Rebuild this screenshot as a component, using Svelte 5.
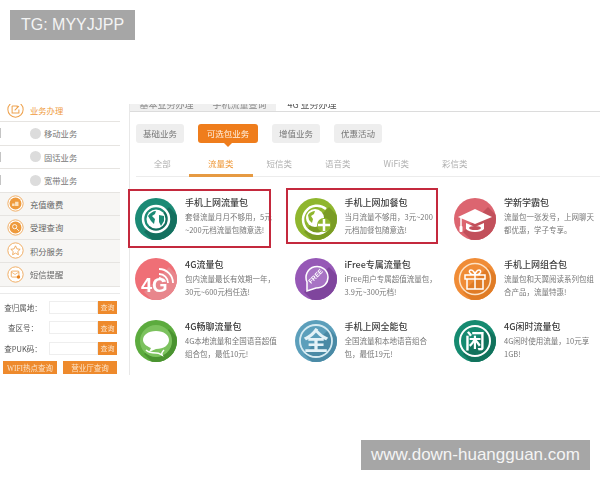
<script>
  const subMenu = ["移动业务", "固话业务", "宽带业务"];
  const lookups = [
    { label: "查归属地：" },
    { label: "查区号：" },
    { label: "查PUK码：" }
  ];
  const pills = ["基础业务", "可选包业务", "增值业务", "优惠活动"];
  const filters = ["全部", "流量类", "短信类", "语音类", "WiFi类", "彩信类"];
  const packs = [
    { id: "globe", color: "#1b8a75", shade: "#14705f", title: "手机上网流量包", lines: ["套餐流量月月不够用，5元", "~200元档流量包随意选!"], mark: "mark-a" },
    { id: "plus", color: "#8fb62e", shade: "#7a9c24", title: "手机上网加餐包", lines: ["当月流量不够用，3元~200", "元档加餐包随意选!"], mark: "mark-b" },
    { id: "cap", color: "#dc6570", shade: "#c2505b", title: "学新学霸包", lines: ["流量包一张发号，上网聊天", "都优惠，学子专享。"] },
    { id: "4g", color: "#ef6f76", shade: "#e8868c", title: "4G流量包", lines: ["包内流量最长有效期一年，", "30元~600元档任选!"] },
    { id: "free", color: "#9658b6", shade: "#7f459d", title: "iFree专属流量包", lines: ["iFree用户专属超值流量包，", "3.9元~300元档!"] },
    { id: "gift", color: "#f08c36", shade: "#e07c26", title: "手机上网组合包", lines: ["流量包和天翼阅读系列包组", "合产品，流量特惠!"] },
    { id: "chat", color: "#5cab3e", shade: "#4a9330", title: "4G畅聊流量包", lines: ["4G本地流量和全国语音超值", "组合包，最低10元!"] },
    { id: "all", color: "#5c9fbb", shade: "#4a8aa5", title: "手机上网全能包", lines: ["全国流量和本地语音组合", "包，最低19元!"] },
    { id: "idle", color: "#158a70", shade: "#11725c", title: "4G闲时流量包", lines: ["4G闲时使用流量，10元享", "1GB!"] }
  ];
</script>

<div class="page">
  <div class="tag">TG: MYYJJPP</div>

  <div class="shot">
    <aside class="side">
      <div class="menu-row head">
        <svg class="ring" viewBox="0 0 20 20"><circle cx="10" cy="10" r="9" fill="#fff" stroke="#eea24e" stroke-width="1.2"/><path d="M6 6h6v2M6 6v8h8v-4M9 11l5-5" fill="none" stroke="#eea24e" stroke-width="1.2"/></svg>
        <span>业务办理</span>
      </div>
      {#each subMenu as item}
        <div class="menu-row sub">
          <i class="dot"></i>
          <span>{item}</span>
        </div>
      {/each}
      <div class="menu-row">
        <svg class="ring" viewBox="0 0 20 20"><circle cx="10" cy="10" r="9" fill="#fff" stroke="#eea24e" stroke-width="1"/><circle cx="10" cy="10" r="7" fill="#ee9a3c"/><path d="M6 13v-3h3v3zM9.500 13V8h4v5z" fill="#fbe1bf"/></svg>
        <span>充值缴费</span>
      </div>
      <div class="menu-row">
        <svg class="ring" viewBox="0 0 20 20"><circle cx="10" cy="10" r="9" fill="#fff" stroke="#eea24e" stroke-width="1"/><circle cx="10" cy="10" r="7" fill="#ee9a3c"/><circle cx="9" cy="9" r="2.500" fill="none" stroke="#fff"/><path d="M11 11l3 3" stroke="#fff"/></svg>
        <span>受理查询</span>
      </div>
      <div class="menu-row">
        <svg class="ring" viewBox="0 0 20 20"><circle cx="10" cy="10" r="9" fill="#fff" stroke="#eea24e" stroke-width="1"/><path d="M10 4.500l1.700 3.600 3.800.5-2.800 2.600.7 3.800-3.400-1.900-3.400 1.900.7-3.800-2.800-2.600 3.800-.5z" fill="none" stroke="#eea24e"/></svg>
        <span>积分服务</span>
      </div>
      <div class="menu-row">
        <svg class="ring" viewBox="0 0 20 20"><circle cx="10" cy="10" r="9" fill="#fff" stroke="#eea24e" stroke-width="1"/><rect x="5" y="6" width="9" height="7" rx="1" fill="none" stroke="#eea24e"/><path d="M5 7l4.500 3L14 7" fill="none" stroke="#eea24e" stroke-width=".8"/><circle cx="13.500" cy="13" r="2" fill="#e8821e"/></svg>
        <span>短信提醒</span>
      </div>

      <div class="lookup">
        {#each lookups as row}
          <div class="lookup-row">
            <label for={row.label}>{row.label}</label>
            <input id={row.label} type="text" />
            <button>查询</button>
          </div>
        {/each}
        <div class="lookup-btns">
          <button>WIFI热点查询</button>
          <button>营业厅查询</button>
        </div>
      </div>
    </aside>

    <main class="main">
      <div class="tabs">
        <span class="tab">基本业务办理</span>
        <span class="tab">手机流量查询</span>
        <span class="tab on">4G 业务办理</span>
      </div>

      <div class="pills">
        {#each pills as pill, i}
          <span class="pill" class:active={i === 1}>{pill}</span>
        {/each}
      </div>

      <div class="filters">
        {#each filters as f, i}
          <span class="filter" class:current={i === 1}>{f}</span>
        {/each}
      </div>

      <div class="packs">
        {#each packs as p}
          <div class="pack {p.mark ?? ''}">
            <svg class="icon" viewBox="0 0 42 42">
              <defs><clipPath id="clip-{p.id}"><circle cx="21" cy="21" r="21"/></clipPath></defs>
              <circle cx="21" cy="21" r="21" fill={p.color}/>
              <polygon points="34,9 60,35 35,60 9,34" fill={p.shade} clip-path="url(#clip-{p.id})"/>
              {#if p.id === "globe"}
                <circle cx="21" cy="21" r="13" fill="none" stroke="#fff" stroke-width="2.500"/>
                <circle cx="21" cy="21" r="9.500" fill="#fff"/>
                <path d="M13 18c2-3 5-5 8-5l-1 3-3 2 3 3-1 5-3-3zM24 17l5 1 0 5-3 5-2-4z" fill={p.color}/>
              {:else if p.id === "plus"}
                <path d="M31 11a14 14 0 1 0 3 18" fill="none" stroke="#fff" stroke-width="2.500"/>
                <circle cx="20" cy="20" r="9" fill="#fff"/>
                <path d="M13 17c2-3 5-4 7-4l-1 3-3 2 2 3-1 4-3-3z" fill={p.color}/>
                <circle cx="29" cy="27" r="7" fill={p.color}/>
                <path d="M29 21v12M23 27h12" stroke="#fff" stroke-width="2.500"/>
              {:else if p.id === "cap"}
                <path d="M21 11L38 19 21 26 4 19z" fill="#fff"/>
                <path d="M12 25v6c3 4 15 4 18 0v-6l-9 4z" fill="#fff"/>
                <ellipse cx="21" cy="30" rx="6" ry="2" fill={p.shade}/>
                <path d="M7 20v10" stroke="#fff" stroke-width="1.500"/>
                <rect x="5.500" y="28" width="3" height="6" rx="1" fill="#fff"/>
              {:else if p.id === "4g"}
                <text x="6" y="34" class="big">4G</text>
                <path d="M24 16a9 9 0 0 1 9 9M24 11a14 14 0 0 1 14 14M24 20a5 5 0 0 1 4 4" fill="none" stroke="#fff" stroke-width="1.800"/>
              {:else if p.id === "free"}
                <path d="M33 19a11 11 0 1 0-21 5l0 9 9-3c8 0 12-5 12-11z" fill="#a873c4" stroke="#fff" stroke-width="1.500"/>
                <text x="0" y="0" class="free" transform="translate(16 26) rotate(-45)">FREE</text>
              {:else if p.id === "gift"}
                <circle cx="21" cy="21" r="15.500" fill="none" stroke="#fde3c6" stroke-width="1.500"/>
                <path d="M11 17h20v4H11zM13 21h16v10H13zM21 17v14M21 17c-6 0-7-5-4-5 2 0 4 3 4 5zM21 17c6 0 7-5 4-5-2 0-4 3-4 5z" fill="none" stroke="#fff" stroke-width="1.500"/>
              {:else if p.id === "chat"}
                <circle cx="21" cy="21" r="16" fill="#7cc25e"/>
                <path d="M21 11c8 0 13 4 13 9s-5 9-13 9l-7 3 2-4c-5-2-8-5-8-8 0-5 5-9 13-9z" fill="#fff"/>
                <path d="M11 30c3 3 7 3 10 3 3 0 4 1 6 2-1-2 0-3 2-5" fill="none" stroke="#fff" stroke-width="1.500"/>
              {:else if p.id === "all"}
                <circle cx="21" cy="21" r="16" fill="none" stroke="#d6ebf2" stroke-width="1.800"/>
                <text x="21" y="30" class="glyph">全</text>
              {:else}
                <circle cx="21" cy="21" r="15" fill="none" stroke="#fff" stroke-width="2"/>
                <text x="21" y="29" class="glyph idle">闲</text>
              {/if}
            </svg>
            <div class="pack-text">
              <h3>{p.title}</h3>
              {#each p.lines as line}
                <p>{line}</p>
              {/each}
            </div>
          </div>
        {/each}
      </div>
    </main>
  </div>

  <div class="site">www.down-huangguan.com</div>
</div>

<style>
  :global(body) {
    background: #fff;
  }
  .page {
    position: relative;
    width: 600px;
    height: 480px;
    overflow: hidden;
    font-family: "Noto Sans CJK SC", "Liberation Sans", sans-serif;
    padding-top: 104px;
    box-sizing: border-box;
  }
  .tag,
  .site {
    position: absolute;
    background: #a6a6a6;
    color: #f4f4f4;
    font-family: "Liberation Sans", sans-serif;
    display: flex;
    align-items: center;
    justify-content: center;
    height: 30px;
  }
  .tag {
    left: 10px;
    top: 10px;
    width: 125px;
    font-size: 16px;
  }
  .site {
    left: 361px;
    top: 440px;
    width: 229px;
    font-size: 17px;
  }
  .shot {
    display: flex;
    height: 271px;
    filter: blur(0.4px);
  }
  .side {
    width: 120px;
    flex: none;
    color: #666;
    font-size: 8.300px;
    overflow: hidden;
  }
  .menu-row {
    height: 23.500px;
    box-sizing: border-box;
    display: flex;
    align-items: center;
    gap: 6px;
    padding-left: 7px;
    background: #f7f6f4;
    border-bottom: 1px solid #e6e4e1;
  }
  .menu-row.head {
    height: 18px;
    padding-bottom: 6px;
    background: #fff;
    color: #ef9a3c;
  }
  .menu-row.sub {
    background: linear-gradient(#c4c4c4, #c4c4c4) 0 50% / 1px 10px no-repeat #fff;
    padding-left: 30px;
    gap: 3px;
    color: #777;
  }
  .ring {
    width: 17px;
    height: 17px;
    flex: none;
  }
  .head .ring {
    margin-top: -1px;
  }
  .dot {
    width: 11px;
    height: 11px;
    border-radius: 50%;
    background: #dcdcdc;
  }
  .lookup {
    margin-top: 6px;
    border-top: 1px solid #eaeaea;
    padding-top: 7px;
    color: #555;
    font-size: 7.500px;
  }
  .lookup-row {
    display: flex;
    align-items: center;
    height: 13px;
    margin-bottom: 7.500px;
  }
  .lookup-row label {
    width: 46px;
    text-align: center;
    margin-right: 3px;
    white-space: nowrap;
  }
  .lookup-row input {
    width: 49px;
    height: 13px;
    box-sizing: border-box;
    border: 1px solid #eee;
    padding: 0;
    background: #fff;
  }
  button {
    border: 0;
    padding: 0;
    background: #ee8a2c;
    color: #fbe3c8;
    font: inherit;
  }
  .lookup-row button {
    width: 19px;
    height: 13px;
    font-size: 7px;
  }
  .lookup-btns {
    display: flex;
    gap: 6px;
    padding-left: 3px;
    margin-top: -1.500px;
  }
  .lookup-btns button {
    height: 13px;
    width: 54px;
    font-size: 7.500px;
    font-family: "Liberation Serif", "Noto Sans CJK SC", serif;
  }
  .main {
    flex: 1;
    margin-left: 9px;
    border-left: 1px solid #e8e8e8;
    min-width: 0;
  }
  .tabs {
    height: 7px;
    display: flex;
    align-items: flex-end;
    overflow: hidden;
    border-bottom: 1px solid #dcdcdc;
    background: #fff;
    font-size: 9px;
    line-height: 12px;
    color: #888;
  }
  .tab {
    width: 73px;
    height: 7px;
    display: flex;
    justify-content: center;
    align-items: flex-end;
    background: #f0f0f0;
    flex: none;
  }
  .tab.on {
    width: 70px;
    background: #fff;
    margin-left: 1px;
    color: #555;
  }
  .pills {
    display: flex;
    gap: 14px;
    padding: 12px 0 0 6px;
  }
  .pill {
    position: relative;
    width: 48px;
    height: 19px;
    line-height: 19px;
    text-align: center;
    background: #eeeeee;
    border-radius: 3px;
    font-size: 8.500px;
    color: #777;
  }
  .pill.active {
    width: 60px;
    background: #ef7d1c;
    color: #fff1e2;
  }
  .pill.active::after {
    content: "";
    position: absolute;
    left: 26px;
    top: 19px;
    border: 4px solid transparent;
    border-top-color: #ef7d1c;
    border-bottom: 0;
  }
  .filters {
    display: grid;
    grid-template-columns: repeat(6, 58.500px);
    margin: 8px 0 0 6px;
    height: 25px;
    border-bottom: 1px solid #ececec;
    font-size: 8.500px;
    color: #b0b0b0;
    width: 464px;
  }
  .filter {
    margin-left: -6px;
    text-align: center;
    line-height: 25px;
    height: 26px;
    box-sizing: border-box;
  }
  .filter.current {
    color: #ef9a3c;
    border-bottom: 3px solid #e69a42;
  }
  .packs {
    display: grid;
    grid-template-columns: repeat(3, 159.500px);
    grid-auto-rows: 62px;
    margin-top: 12px;
  }
  .pack {
    position: relative;
    display: flex;
    gap: 8px;
    padding: 9px 0 0 6px;
    box-sizing: border-box;
    margin-left: -1px;
  }
  .pack:nth-child(n + 4) {
    padding-top: 7px;
  }
  .pack.mark-a::after,
  .pack.mark-b::after {
    content: "";
    position: absolute;
    left: -1px;
    top: 0;
    height: 59px;
    width: 143px;
    box-sizing: border-box;
    border: 2px solid #c4293d;
  }
  .pack.mark-b::after {
    left: -3px;
    width: 152px;
    height: 56px;
    top: -1px;
  }
  .icon {
    width: 42px;
    height: 42px;
    flex: none;
  }
  .big {
    font: 700 20px "Liberation Sans", sans-serif;
    fill: #fff;
  }
  .free {
    font: 700 6.500px "Liberation Sans", sans-serif;
    fill: #fff;
  }
  .glyph {
    font-size: 25px;
    font-weight: 700;
    fill: #e4f2f7;
    text-anchor: middle;
  }
  .glyph.idle {
    font-size: 20px;
    fill: #fff;
  }
  .pack-text {
    margin-top: -2px;
    min-width: 0;
  }
  .pack:nth-child(n + 4) .pack-text {
    margin-top: 0;
  }
  h3 {
    margin: 0 0 2px;
    font-size: 9px;
    line-height: 13px;
    font-weight: 500;
    color: #3c3c3c;
    white-space: nowrap;
  }
  p {
    margin: 0;
    font-size: 7.500px;
    line-height: 12.500px;
    color: #777;
    white-space: nowrap;
  }
</style>
